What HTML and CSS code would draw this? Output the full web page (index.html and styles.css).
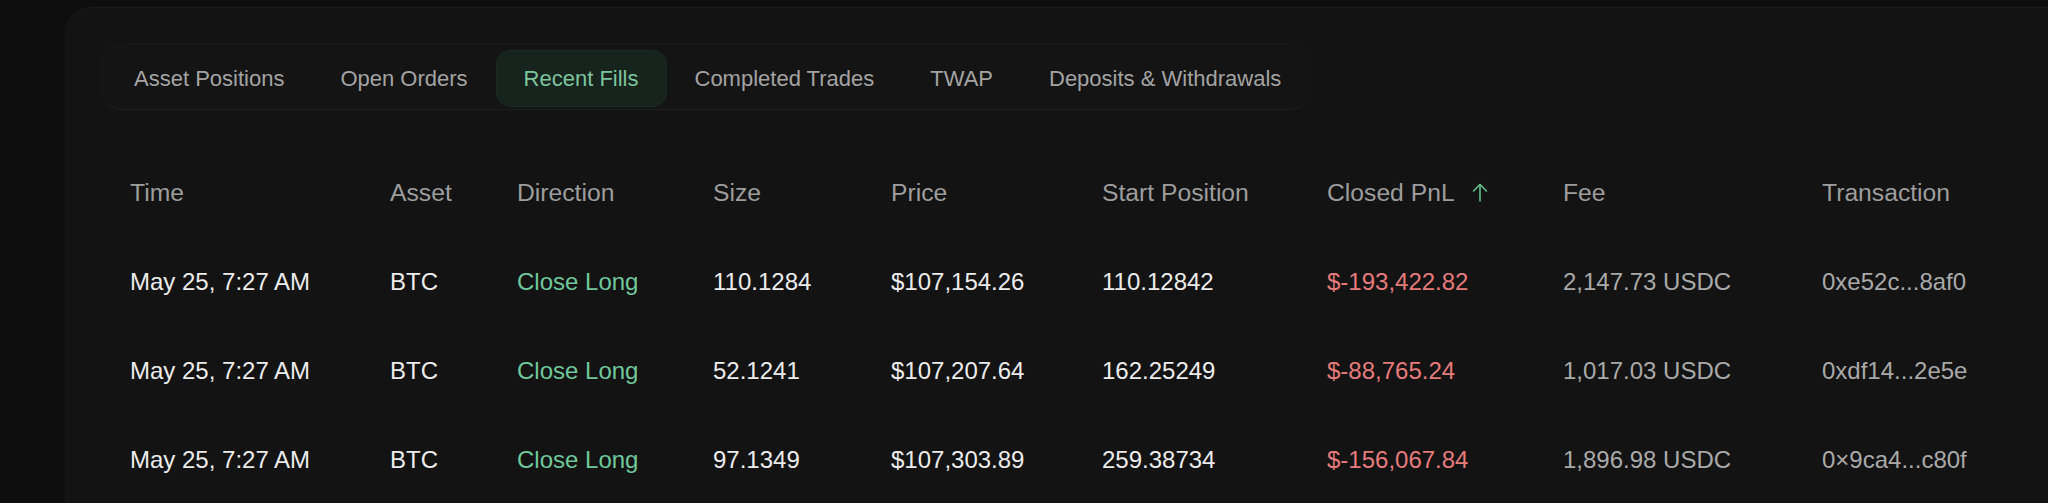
FILE: index.html
```html
<!DOCTYPE html>
<html lang="en">
<head>
<meta charset="utf-8">
<title>Recent Fills</title>
<link rel="stylesheet" href="styles.css">
</head>
<body>
<main class="card">
  <nav class="tabs">
    <span class="tab">Asset Positions</span>
    <span class="tab">Open Orders</span>
    <span class="tab tab-active">Recent Fills</span>
    <span class="tab">Completed Trades</span>
    <span class="tab">TWAP</span>
    <span class="tab">Deposits &amp; Withdrawals</span>
  </nav>

  <div class="fills">
    <div class="th">Time</div>
    <div class="th">Asset</div>
    <div class="th">Direction</div>
    <div class="th">Size</div>
    <div class="th">Price</div>
    <div class="th">Start Position</div>
    <div class="th th-sort">Closed PnL
      <svg class="sort-arrow" width="16" height="19" viewBox="0 0 16 19" fill="none" stroke="currentColor" stroke-width="1.6" stroke-linecap="round" stroke-linejoin="round"><path d="M8 18V1.5"/><path d="M1.5 8L8 1.5L14.5 8"/></svg>
    </div>
    <div class="th">Fee</div>
    <div class="th">Transaction</div>

    <div class="td">May 25, 7:27 AM</div>
    <div class="td">BTC</div>
    <div class="td pos">Close Long</div>
    <div class="td">110.1284</div>
    <div class="td">$107,154.26</div>
    <div class="td">110.12842</div>
    <div class="td neg">$-193,422.82</div>
    <div class="td muted">2,147.73 USDC</div>
    <div class="td muted">0xe52c...8af0</div>

    <div class="td">May 25, 7:27 AM</div>
    <div class="td">BTC</div>
    <div class="td pos">Close Long</div>
    <div class="td">52.1241</div>
    <div class="td">$107,207.64</div>
    <div class="td">162.25249</div>
    <div class="td neg">$-88,765.24</div>
    <div class="td muted">1,017.03 USDC</div>
    <div class="td muted">0xdf14...2e5e</div>

    <div class="td">May 25, 7:27 AM</div>
    <div class="td">BTC</div>
    <div class="td pos">Close Long</div>
    <div class="td">97.1349</div>
    <div class="td">$107,303.89</div>
    <div class="td">259.38734</div>
    <div class="td neg">$-156,067.84</div>
    <div class="td muted">1,896.98 USDC</div>
    <div class="td muted">0×9ca4...c80f</div>
  </div>
</main>
</body>
</html>
```

FILE: styles.css
```css
html, body {
  margin: 0;
  padding: 0;
  background: #0e0e0e;
  height: 100%;
  overflow: hidden;
}

body {
  font-family: "Liberation Sans", Arial, sans-serif;
  padding-top: 7px;
  box-sizing: border-box;
}

.card {
  margin-left: 65px;
  margin-right: -40px;
  min-height: 600px;
  background: #131313;
  border-top: 1px solid #1a1a1a;
  border-left: 1px solid #161616;
  border-top-left-radius: 26px;
  padding: 35px 0 0 36px;
  box-sizing: border-box;
}

.tabs {
  display: flex;
  width: max-content;
  height: 67px;
  box-sizing: border-box;
  padding: 6px 1px 2px 3px;
  background: #141414;
  border: 1px solid #181818;
  border-bottom-color: #1e1e1e;
  border-radius: 20px;
  align-items: stretch;
}

.tab {
  display: flex;
  align-items: center;
  padding: 0 28px;
  font-size: 22px;
  color: #a3a3a3;
  white-space: nowrap;
  border-radius: 15px;
}

.tab-active {
  color: #7cc49c;
  background: #17231d;
  box-shadow: inset 0 0 0 1px #1b2a22;
}

.fills {
  margin: 38px 0 0 28px;
  display: grid;
  grid-template-columns: 260px 127px 196px 178px 211px 225px 236px 259px 1fr;
  grid-auto-rows: 89px;
  align-items: center;
  font-size: 24px;
  line-height: 28px;
}

.th {
  color: #9d9d9d;
  font-size: 24.7px;
  white-space: nowrap;
}

.th-sort {
  display: flex;
  align-items: center;
  gap: 17px;
}

.sort-arrow {
  color: #5fbf8c;
  margin-top: -1px;
}

.td {
  color: #ececec;
  white-space: nowrap;
}

.td.pos {
  color: #6fc79a;
}

.td.neg {
  color: #e57b7b;
}

.td.muted {
  color: #a9a9a9;
}
```
